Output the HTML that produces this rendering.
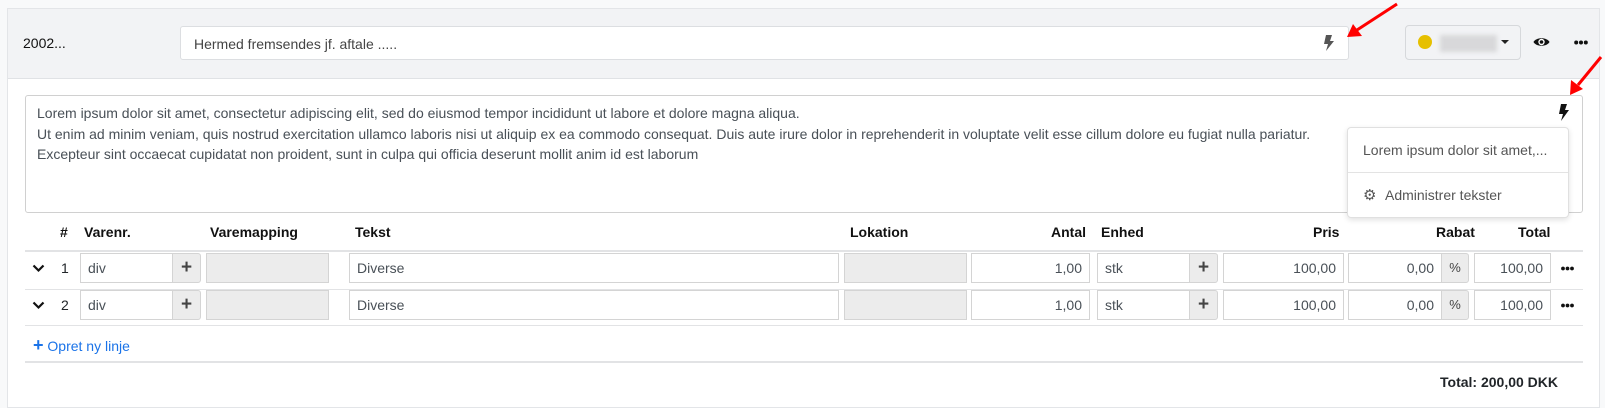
<!DOCTYPE html>
<html><head><meta charset="utf-8"><style>
*{box-sizing:border-box;margin:0;padding:0}
body{width:1605px;height:405px;background:#f8f9fa;font-family:"Liberation Sans",sans-serif;font-size:14px;color:#212529;position:relative;overflow:hidden}
.a{position:absolute}
.card{left:7px;top:8px;width:1593px;height:400px;background:#fff;border:1px solid #e3e5e8}
.hdr{left:8px;top:9px;width:1591px;height:70px;background:#f2f3f5;border-bottom:1px solid #e0e2e5}
.inp{position:absolute;height:30px;border:1px solid #d4d4d4;background:#fff;color:#495057;padding:0 7px;line-height:28px;font-size:14px}
.dis{background:#ececec}
.r{text-align:right}
.btn{position:absolute;height:30px;background:#ececec;border:1px solid #d4d4d4;border-radius:0 3px 3px 0;text-align:center;line-height:27px;color:#444;font-size:19px;font-weight:bold}
.th{position:absolute;top:224px;font-weight:bold;font-size:14px;color:#111}
.line{position:absolute;left:25px;width:1558px;background:#e2e3e5}
</style></head><body>
<div class="a card"></div>
<div class="a hdr"></div>
<div class="a" style="left:23px;top:35px;color:#111">2002...</div>
<div class="a" style="left:180px;top:26px;width:1169px;height:34px;background:#fff;border:1px solid #dcdee1;border-radius:3px;padding-left:13px;line-height:34px;color:#444">Hermed fremsendes jf. aftale .....</div>
<svg class="a" style="left:1323px;top:35px" width="11" height="16" viewBox="0 0 11 16"><path d="M3 0h6L7 6h4L3 16l2-7H1z" fill="#555"/></svg>
<div class="a" style="left:1405px;top:25px;width:116px;height:35px;border:1px solid #d6d8db;border-radius:4px;background:#f2f3f5"></div>
<div class="a" style="left:1418px;top:35px;width:14px;height:14px;border-radius:50%;background:#e6c000"></div>
<div class="a" style="left:1440px;top:35px;width:57px;height:17px;background:#d8d8da;filter:blur(2px)"></div>
<div class="a" style="left:1501px;top:40px;border-left:4px solid transparent;border-right:4px solid transparent;border-top:4px solid #222"></div>
<svg class="a" style="left:1533px;top:36px" width="17" height="12" viewBox="0 0 17 12"><path d="M0.5 6C3 1 14 1 16.5 6C14 11 3 11 0.5 6z" fill="#111"/><circle cx="8.5" cy="6" r="3.2" fill="#fff"/><circle cx="8.5" cy="6" r="1.8" fill="#111"/></svg>
<svg class="a" style="left:1574px;top:40px" width="14" height="5"><circle cx="2.2" cy="2.5" r="2" fill="#111"/><circle cx="7" cy="2.5" r="2" fill="#111"/><circle cx="11.8" cy="2.5" r="2" fill="#111"/></svg>

<div class="a" style="left:25px;top:95px;width:1558px;height:118px;border:1px solid #d0d0d0;border-radius:3px;background:#fff"></div>
<div class="a" style="left:37px;top:103px;line-height:20.5px;color:#495057">Lorem ipsum dolor sit amet, consectetur adipiscing elit, sed do eiusmod tempor incididunt ut labore et dolore magna aliqua.<br>Ut enim ad minim veniam, quis nostrud exercitation ullamco laboris nisi ut aliquip ex ea commodo consequat. Duis aute irure dolor in reprehenderit in voluptate velit esse cillum dolore eu fugiat nulla pariatur.<br>Excepteur sint occaecat cupidatat non proident, sunt in culpa qui officia deserunt mollit anim id est laborum</div>
<svg class="a" style="left:1558px;top:104px" width="11" height="17" viewBox="0 0 11 17"><path d="M3 0h6L7 6h4L3 17l2-7H1z" fill="#111"/></svg>
<div class="a" style="left:1347px;top:127px;width:222px;height:91px;background:#fff;border:1px solid #e0e0e0;border-radius:4px;box-shadow:0 2px 6px rgba(0,0,0,.12)"></div>
<div class="a" style="left:1363px;top:142px;color:#555">Lorem ipsum dolor sit amet,...</div>
<div class="a" style="left:1348px;top:172px;width:220px;height:1px;background:#e3e3e3"></div>
<div class="a" style="left:1363px;top:186px;color:#555;font-size:15px">⚙</div>
<div class="a" style="left:1385px;top:187px;color:#555">Administrer tekster</div>

<div class="th" style="left:60px">#</div>
<div class="th" style="left:84px">Varenr.</div>
<div class="th" style="left:210px">Varemapping</div>
<div class="th" style="left:355px">Tekst</div>
<div class="th" style="left:850px">Lokation</div>
<div class="th" style="left:1051px">Antal</div>
<div class="th" style="left:1101px">Enhed</div>
<div class="th" style="left:1313px">Pris</div>
<div class="th" style="left:1436px">Rabat</div>
<div class="th" style="left:1518px">Total</div>
<div class="line" style="top:250px;height:2px"></div>
<div class="line" style="top:289px;height:1px"></div>
<div class="line" style="top:325px;height:1px"></div>
<div class="line" style="top:361px;height:2px"></div>

<div id="rows"></div>
<div class="a" style="left:33px;top:335px;color:#1a73e8;font-size:14px"><b style="font-size:18px">+</b> Opret ny linje</div>
<div class="a" style="left:1430px;top:374px;font-weight:bold;width:128px;text-align:right;white-space:nowrap">Total: 200,00 DKK</div>

<svg class="a" style="left:0;top:0" width="1605" height="120">
<line x1="1397" y1="4" x2="1357" y2="30" stroke="#f00" stroke-width="3"/><polygon points="1347,37 1353,24 1362,36" fill="#f00"/>
<line x1="1601" y1="57" x2="1578" y2="85" stroke="#f00" stroke-width="3"/><polygon points="1570,95 1571,80 1583,89" fill="#f00"/>
</svg>
<script>
var h='';[253,290].forEach(function(t,i){
h+='<svg class="a" style="left:32px;top:'+(t+11)+'px" width="13" height="9" viewBox="0 0 13 9"><path d="M1.5 1.5l5 5 5-5" stroke="#111" stroke-width="2.2" fill="none"/></svg>';
h+='<div class="a" style="left:61px;top:'+(t+7)+'px">'+(i+1)+'</div>';
h+='<div class="inp" style="left:80px;top:'+t+'px;width:93px">div</div><div class="btn" style="left:172px;top:'+t+'px;width:29px">+</div>';
h+='<div class="inp dis" style="left:206px;top:'+t+'px;width:123px"></div>';
h+='<div class="inp" style="left:349px;top:'+t+'px;width:490px">Diverse</div>';
h+='<div class="inp dis" style="left:844px;top:'+t+'px;width:123px"></div>';
h+='<div class="inp r" style="left:971px;top:'+t+'px;width:119px">1,00</div>';
h+='<div class="inp" style="left:1097px;top:'+t+'px;width:93px">stk</div><div class="btn" style="left:1189px;top:'+t+'px;width:29px">+</div>';
h+='<div class="inp r" style="left:1223px;top:'+t+'px;width:121px">100,00</div>';
h+='<div class="inp r" style="left:1348px;top:'+t+'px;width:94px">0,00</div><div class="btn" style="left:1441px;top:'+t+'px;width:28px;font-size:13px;font-weight:normal">%</div>';
h+='<div class="inp r" style="left:1474px;top:'+t+'px;width:77px">100,00</div>';
h+='<svg class="a" style="left:1561px;top:'+(t+13)+'px" width="13" height="5"><circle cx="2" cy="2.5" r="1.9" fill="#111"/><circle cx="6.5" cy="2.5" r="1.9" fill="#111"/><circle cx="11" cy="2.5" r="1.9" fill="#111"/></svg>';
});document.getElementById('rows').innerHTML=h;
</script>
</body></html>
